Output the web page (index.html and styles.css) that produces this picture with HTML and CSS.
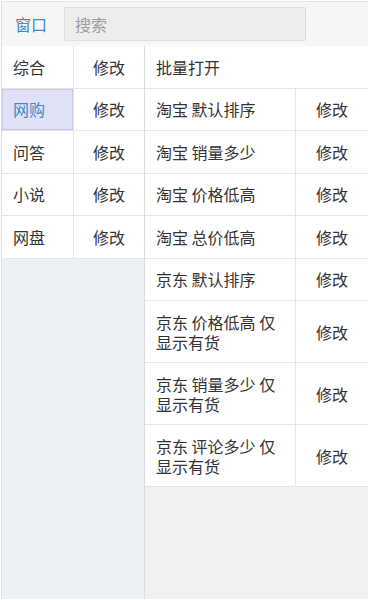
FILE: index.html
```html
<!DOCTYPE html>
<html lang="zh-CN">
<head>
<meta charset="utf-8">
<title>窗口</title>
<link rel="stylesheet" href="styles.css">
</head>
<body>
<div class="app">
  <div class="topbar">
    <span class="label">窗口</span>
    <input class="search" type="text" placeholder="搜索">
  </div>
  <div class="main">
    <div class="left">
      <div class="lrow"><div class="name">综合</div><div class="edit">修改</div></div>
      <div class="lrow"><div class="name selected">网购</div><div class="edit">修改</div></div>
      <div class="lrow"><div class="name">问答</div><div class="edit">修改</div></div>
      <div class="lrow"><div class="name">小说</div><div class="edit">修改</div></div>
      <div class="lrow"><div class="name">网盘</div><div class="edit">修改</div></div>
    </div>
    <div class="right">
      <div class="rhead">批量打开</div>
      <div class="rrow"><div class="rname">淘宝 默认排序</div><div class="edit">修改</div></div>
      <div class="rrow"><div class="rname">淘宝 销量多少</div><div class="edit">修改</div></div>
      <div class="rrow"><div class="rname">淘宝 价格低高</div><div class="edit">修改</div></div>
      <div class="rrow"><div class="rname">淘宝 总价低高</div><div class="edit">修改</div></div>
      <div class="rrow"><div class="rname">京东 默认排序</div><div class="edit">修改</div></div>
      <div class="rrow"><div class="rname multi">京东 价格低高 仅显示有货</div><div class="edit">修改</div></div>
      <div class="rrow"><div class="rname multi">京东 销量多少 仅显示有货</div><div class="edit">修改</div></div>
      <div class="rrow"><div class="rname multi">京东 评论多少 仅显示有货</div><div class="edit">修改</div></div>
    </div>
  </div>
</div>
</body>
</html>
```
FILE: styles.css
```css
html, body {
  margin: 0;
  padding: 0;
  background: #ffffff;
}
body {
  font-family: "Noto Sans CJK SC", "Noto Sans", sans-serif;
  font-size: 16px;
  color: #333333;
}
.app {
  margin: 1px 0 0 1px;
  border-top: 1px solid #e3e3e3;
  border-left: 1px solid #dddddd;
  height: 598px;
  display: flex;
  flex-direction: column;
  box-sizing: border-box;
  overflow: hidden;
}
.topbar {
  height: 44px;
  flex: none;
  display: flex;
  align-items: center;
  background: #f6f6f6;
  padding-left: 13px;
}
.label {
  width: 49px;
  color: #3a8cc8;
  line-height: 20px;
}
.search {
  box-sizing: border-box;
  width: 242px;
  height: 34px;
  margin: 0;
  background: #ededed;
  border: 1px solid #dedede;
  border-radius: 2px;
  padding: 0 0 0 10px;
  font-family: "Noto Sans CJK SC", "Noto Sans", sans-serif;
  font-size: 16px;
  color: #333;
  outline: none;
}
.search::placeholder {
  color: #9c9c9c;
}
.main {
  flex: 1;
  display: flex;
  min-height: 0;
}
.left {
  width: 142px;
  flex: none;
  background: #edf0f5;
  border-right: 1px solid #dcdcdc;
}
.lrow {
  display: grid;
  grid-template-columns: 72px 1fr;
  min-height: 41.5px;
  border-bottom: 1px solid #e6e6e6;
  background: #ffffff;
}
.name {
  display: flex;
  align-items: center;
  padding-left: 11px;
  line-height: 20px;
  border-right: 1px solid #e6e6e6;
}
.name.selected {
  background: #dfe2f6;
  color: #3a8cc8;
  box-shadow: inset 0 0 0 1px #c8cce6;
}
.edit {
  display: flex;
  align-items: center;
  justify-content: center;
  line-height: 20px;
}
.right {
  flex: 1;
  background: #f0f1f1;
}
.rhead {
  background: #ffffff;
  min-height: 41.5px;
  display: flex;
  align-items: center;
  padding-left: 11px;
  line-height: 20px;
  border-bottom: 1px solid #e6e6e6;
}
.rrow {
  display: grid;
  grid-template-columns: 151px 1fr;
  min-height: 41.5px;
  background: #ffffff;
  border-bottom: 1px solid #e6e6e6;
}
.rname {
  display: flex;
  align-items: center;
  padding: 0 10px 0 11px;
  line-height: 20px;
  border-right: 1px solid #e6e6e6;
}
.rname.multi {
  padding-top: 10.5px;
  padding-bottom: 10.5px;
}
```
